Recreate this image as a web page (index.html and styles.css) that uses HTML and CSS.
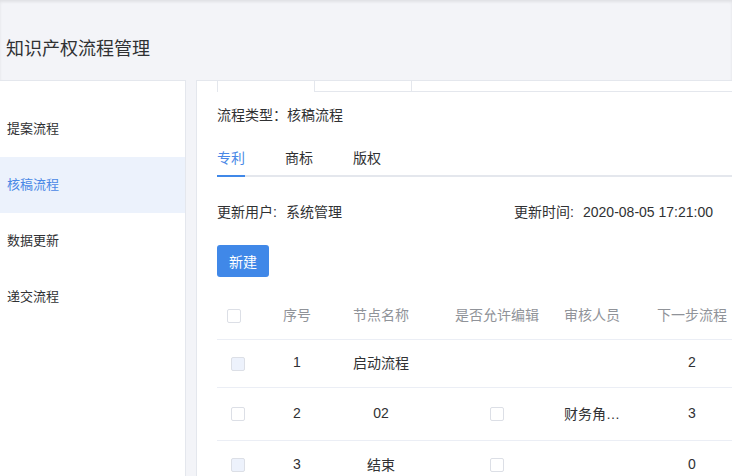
FILE: index.html
```html
<!DOCTYPE html>
<html lang="zh-CN">
<head>
<meta charset="utf-8">
<title>知识产权流程管理</title>
<link rel="stylesheet" href="styles.css">
</head>
<body>
<header class="page-head">
  <h1 class="page-title">知识产权流程管理</h1>
</header>
<div class="main">
  <aside class="sidebar">
    <div class="side-item">提案流程</div>
    <div class="side-item active">核稿流程</div>
    <div class="side-item">数据更新</div>
    <div class="side-item">递交流程</div>
  </aside>
  <section class="panel">
    <div class="card-tabs">
      <div class="card-tab current"></div>
      <div class="card-tab"></div>
      <div class="card-tab rest"></div>
    </div>
    <div class="flow-type">流程类型：核稿流程</div>
    <nav class="tabs">
      <div class="tab active">专利</div>
      <div class="tab">商标</div>
      <div class="tab">版权</div>
    </nav>
    <div class="info">
      <div class="info-item"><span class="info-label">更新用户:</span><span>系统管理</span></div>
      <div class="info-item"><span class="info-label">更新时间:</span><span>2020-08-05 17:21:00</span></div>
    </div>
    <button class="btn-primary">新建</button>
    <div class="table">
      <div class="tr thead">
        <div class="td sel"><span class="cb head-cb"></span></div>
        <div class="td">序号</div>
        <div class="td">节点名称</div>
        <div class="td">是否允许编辑</div>
        <div class="td">审核人员</div>
        <div class="td">下一步流程</div>
      </div>
      <div class="tr row-a">
        <div class="td sel"><span class="cb disabled"></span></div>
        <div class="td">1</div>
        <div class="td">启动流程</div>
        <div class="td"></div>
        <div class="td"></div>
        <div class="td">2</div>
      </div>
      <div class="tr row-b">
        <div class="td sel"><span class="cb"></span></div>
        <div class="td">2</div>
        <div class="td">02</div>
        <div class="td"><span class="cb"></span></div>
        <div class="td">财务角…</div>
        <div class="td">3</div>
      </div>
      <div class="tr row-c">
        <div class="td sel"><span class="cb disabled"></span></div>
        <div class="td">3</div>
        <div class="td">结束</div>
        <div class="td"><span class="cb"></span></div>
        <div class="td"></div>
        <div class="td">0</div>
      </div>
    </div>
  </section>
</div>
</body>
</html>
```

FILE: styles.css
```css
* { box-sizing: border-box; }

html, body {
  margin: 0;
  padding: 0;
  height: 100%;
}

body {
  background: #f3f4f8;
  font-family: "Liberation Sans", "Noto Sans CJK SC", sans-serif;
  color: #303133;
  font-size: 14px;
  overflow: hidden;
}

.page-head {
  height: 80px;
  display: flex;
  align-items: center;
  padding: 17px 0 0 6px;
  box-shadow: inset 0 2px 3px rgba(0, 0, 0, 0.08);
}

.page-title {
  margin: 0;
  font-size: 18px;
  font-weight: normal;
  color: #303133;
  line-height: 24px;
}

.main {
  display: flex;
  gap: 10px;
  height: 396px;
}

.sidebar {
  width: 186px;
  flex: none;
  background: #fff;
  border-top: 1px solid #e4e7ed;
  border-right: 1px solid #e4e7ed;
  padding-top: 20px;
}

.side-item {
  height: 56px;
  line-height: 56px;
  padding-left: 7px;
  font-size: 13px;
  color: #303133;
}

.side-item.active {
  background: #ecf2fc;
  color: #4a88e6;
}

.panel {
  flex: 1;
  min-width: 0;
  background: #fff;
  border: 1px solid #e4e7ed;
  border-right: none;
  border-bottom: none;
  padding-left: 20px;
  overflow: hidden;
}

.card-tabs {
  display: flex;
  height: 11px;
}

.card-tab {
  width: 97px;
  border-left: 1px solid #e4e7ed;
  border-bottom: 1px solid #e4e7ed;
}

.card-tab.current {
  border-bottom: none;
}

.card-tab.rest {
  flex: 1;
}

.flow-type {
  margin-top: 13px;
  line-height: 20px;
}

.tabs {
  margin-top: 12px;
  display: flex;
  gap: 40px;
  border-bottom: 2px solid #e4e7ed;
}

.tab {
  padding-top: 4px;
  line-height: 34px;
  margin-bottom: -2px;
  border-bottom: 2px solid transparent;
  color: #303133;
}

.tab.active {
  color: #4a88e6;
  border-bottom-color: #4088e8;
}

.info {
  margin-top: 25px;
  display: grid;
  grid-template-columns: 297px auto;
  line-height: 20px;
}

.info-label {
  display: inline-block;
  width: 69px;
}

.btn-primary {
  margin-top: 23px;
  width: 52px;
  height: 32px;
  padding: 0;
  border: none;
  border-radius: 3px;
  background: #4088e8;
  color: #fff;
  font-family: inherit;
  font-size: 14px;
  display: block;
}

.table {
  margin-top: 15px;
  width: 560px;
}

.tr {
  display: grid;
  grid-template-columns: 40px 80px 88px 144px 46px 154px;
  border-bottom: 1px solid #ebeef5;
}

.thead { height: 48px; color: #909399; }
.row-a { height: 48px; }
.row-b { height: 53px; }
.row-c { height: 49px; }

.td {
  display: flex;
  align-items: center;
  justify-content: center;
  white-space: nowrap;
  min-width: 0;
  padding-bottom: 3px;
}

.td.sel {
  justify-content: flex-start;
  padding-left: 14px;
  padding-bottom: 0;
}

.thead .td.sel {
  padding-left: 10px;
}

.cb {
  display: inline-block;
  width: 14px;
  height: 14px;
  border: 1px solid #dcdfe6;
  border-radius: 2px;
  background: #fff;
  flex: none;
}

.td .cb {
  margin-top: 3px;
}

.td.sel .cb {
  margin-top: 0;
}

.cb.disabled {
  background: #edf2fc;
}
```
